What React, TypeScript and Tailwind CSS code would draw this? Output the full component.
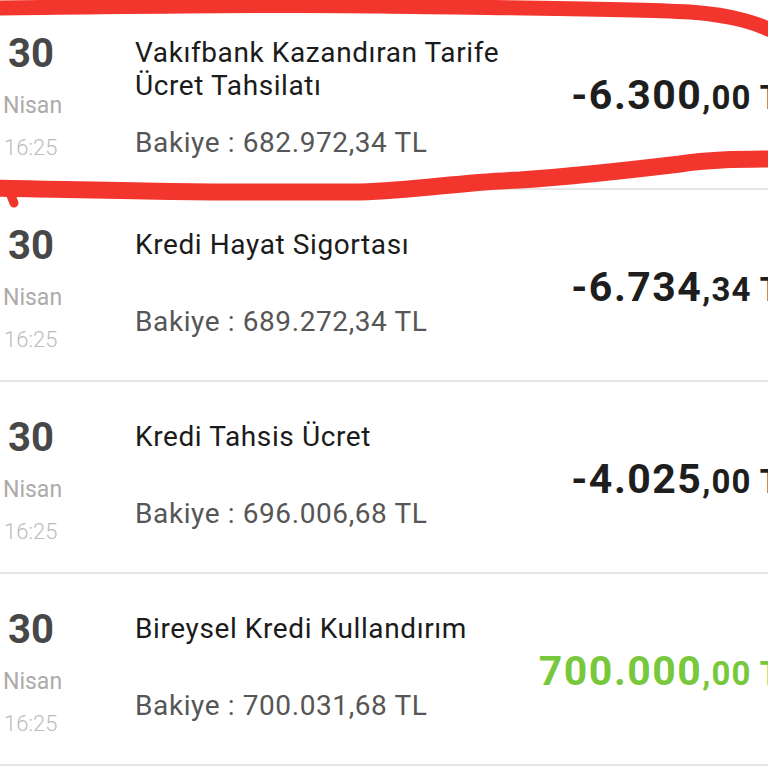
import React from "react"

type Tx = {
  day: string
  month: string
  time: string
  title: string
  balance: string
  main: string
  cents: string
  positive?: boolean
}

const txs: Tx[] = [
  {
    day: "30",
    month: "Nisan",
    time: "16:25",
    title: "Vakıfbank Kazandıran Tarife Ücret Tahsilatı",
    balance: "682.972,34 TL",
    main: "-6.300",
    cents: ",00",
  },
  {
    day: "30",
    month: "Nisan",
    time: "16:25",
    title: "Kredi Hayat Sigortası",
    balance: "689.272,34 TL",
    main: "-6.734",
    cents: ",34",
  },
  {
    day: "30",
    month: "Nisan",
    time: "16:25",
    title: "Kredi Tahsis Ücret",
    balance: "696.006,68 TL",
    main: "-4.025",
    cents: ",00",
  },
  {
    day: "30",
    month: "Nisan",
    time: "16:25",
    title: "Bireysel Kredi Kullandırım",
    balance: "700.031,68 TL",
    main: "700.000",
    cents: ",00",
    positive: true,
  },
]

const Row = ({ tx }: { tx: Tx }) => (
  <div className="flex h-[192px] border-b-2 border-[#e6e6e6]">
    <div className="w-[135px] shrink-0 pl-[8px] pt-[32px]">
      <div className="text-[40px] leading-[48px] font-bold text-[#474747]">{tx.day}</div>
      <div className="mt-[14px] -ml-[5px] text-[23px] leading-[28px] text-[#ababab]">{tx.month}</div>
      <div className="mt-[14px] -ml-[4px] text-[22px] leading-[28px] font-light text-[#bcbcbc]">{tx.time}</div>
    </div>
    <div className="flex-1 min-w-0 flex flex-col pt-[38px]">
      <div className="min-h-[53px] max-w-[380px] text-[28px] leading-[33px] tracking-[0.6px] text-[#1b1b1b]">
        {tx.title}
      </div>
      <div className="mt-[24px] text-[28px] leading-[33px] tracking-[0.6px] text-[#565656]">
        Bakiye : {tx.balance}
      </div>
    </div>
    <div className="shrink-0 flex items-center pt-[6px] -mr-[32px] whitespace-nowrap">
      <span className={`font-bold ${tx.positive ? "text-[#78c83e]" : "text-[#1e1e1e]"}`}>
        <span className="text-[41px] tracking-[1.5px]">{tx.main}</span>
        <span className="text-[33px] tracking-[1px]">{tx.cents} TL</span>
      </span>
    </div>
  </div>
)

export default function App() {
  return (
    <div className="relative w-[768px] h-[768px] overflow-hidden bg-white font-[family-name:Roboto,sans-serif]">
      <div className="-mt-[2px]">
        {txs.map((tx, i) => (
          <Row key={i} tx={tx} />
        ))}
      </div>

      {/* red marker drawn over the first row */}
      <svg
        className="absolute left-0 top-0 pointer-events-none"
        width="768"
        height="230"
        viewBox="0 0 768 230"
        fill="none"
      >
        <path
          d="M -10 8 C 120 7, 260 4, 380 6 C 500 8, 620 8, 690 12 C 730 15, 760 22, 790 40"
          stroke="#f3362d"
          strokeWidth="15"
          strokeLinecap="round"
        />
        <path
          d="M -10 188 C 60 189, 150 192, 250 192 L 360 192 C 420 190, 460 182, 520 180 C 580 176, 630 170, 680 164 C 705 160, 730 159, 790 159"
          stroke="#f3362d"
          strokeWidth="17"
          strokeLinecap="round"
        />
        <path d="M 10 193 L 14 203" stroke="#f3362d" strokeWidth="9" strokeLinecap="round" />
      </svg>
    </div>
  )
}
